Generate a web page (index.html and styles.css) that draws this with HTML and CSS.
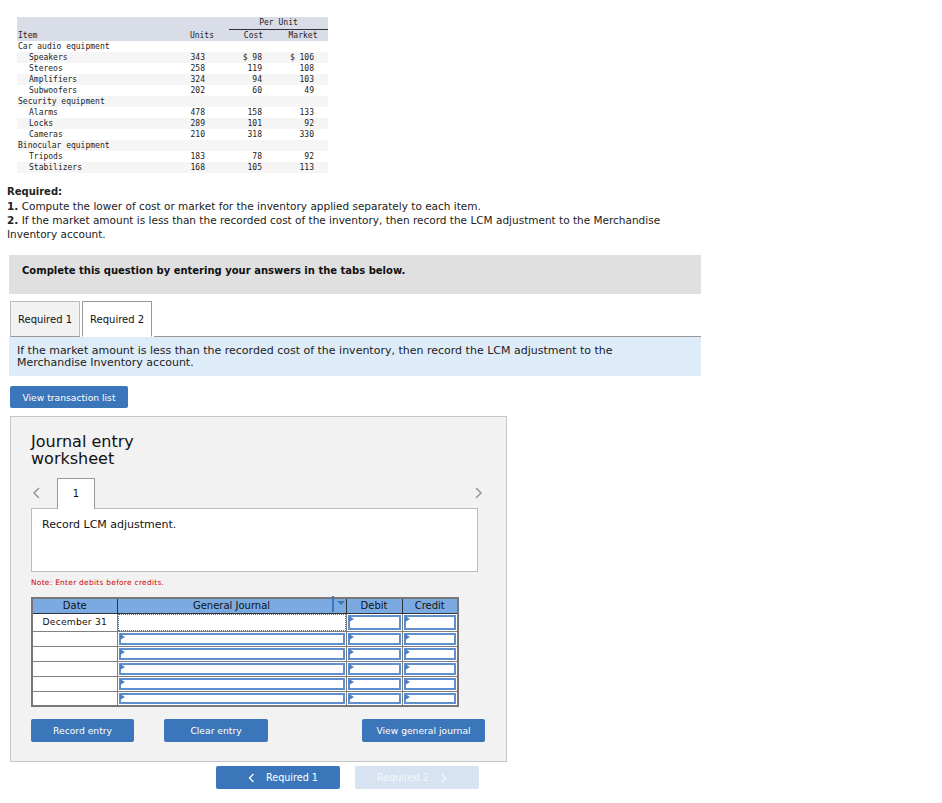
FILE: index.html
```html
<!DOCTYPE html>
<html>
<head>
<meta charset="utf-8">
<link rel="stylesheet" href="styles.css">
</head>
<body>
<div class="page">
  <table class="inv">
    <thead>
      <tr class="h1"><th></th><th></th><th colspan="2" class="perunit">Per Unit</th></tr>
      <tr class="h2"><th class="c-item">Item</th><th class="c-units">Units</th><th class="c-cost">Cost</th><th class="c-mkt">Market</th></tr>
    </thead>
    <tbody>
      <tr><td class="cat">Car audio equipment</td><td></td><td></td><td></td></tr>
      <tr class="alt"><td class="sub">Speakers</td><td class="n1">343</td><td class="n2">$ 98</td><td class="n3">$ 106</td></tr>
      <tr><td class="sub">Stereos</td><td class="n1">258</td><td class="n2">119</td><td class="n3">108</td></tr>
      <tr class="alt"><td class="sub">Amplifiers</td><td class="n1">324</td><td class="n2">94</td><td class="n3">103</td></tr>
      <tr><td class="sub">Subwoofers</td><td class="n1">202</td><td class="n2">60</td><td class="n3">49</td></tr>
      <tr class="alt"><td class="cat">Security equipment</td><td></td><td></td><td></td></tr>
      <tr><td class="sub">Alarms</td><td class="n1">478</td><td class="n2">158</td><td class="n3">133</td></tr>
      <tr class="alt"><td class="sub">Locks</td><td class="n1">289</td><td class="n2">101</td><td class="n3">92</td></tr>
      <tr><td class="sub">Cameras</td><td class="n1">210</td><td class="n2">318</td><td class="n3">330</td></tr>
      <tr class="alt"><td class="cat">Binocular equipment</td><td></td><td></td><td></td></tr>
      <tr><td class="sub">Tripods</td><td class="n1">183</td><td class="n2">78</td><td class="n3">92</td></tr>
      <tr class="alt"><td class="sub">Stabilizers</td><td class="n1">168</td><td class="n2">105</td><td class="n3">113</td></tr>
    </tbody>
  </table>

  <div class="required">
    <p class="req-title">Required:</p>
    <p><b>1.</b> Compute the lower of cost or market for the inventory applied separately to each item.</p>
    <p><b>2.</b> If the market amount is less than the recorded cost of the inventory, then record the LCM adjustment to the Merchandise Inventory account.</p>
  </div>

  <div class="complete">Complete this question by entering your answers in the tabs below.</div>

  <div class="tabs">
    <div class="tab">Required 1</div>
    <div class="tab active">Required 2</div>
    <div class="tab-fill"></div>
  </div>
  <div class="info">If the market amount is less than the recorded cost of the inventory, then record the LCM adjustment to the<br>Merchandise Inventory account.</div>

  <div class="btn-row-top"><button class="btn btn-vtl">View transaction list</button></div>

  <div class="panel">
    <h2 class="ws-title">Journal entry<br>worksheet</h2>
    <div class="ws-nav">
      <svg class="chev" width="10" height="14" viewBox="0 0 10 14"><polyline points="7,2 2,7 7,12" fill="none" stroke="#9a9a9a" stroke-width="1.6"/></svg>
      <div class="ws-tab">1</div>
      <div class="ws-nav-fill"></div>
      <svg class="chev" width="10" height="14" viewBox="0 0 10 14"><polyline points="3,2 8,7 3,12" fill="none" stroke="#9a9a9a" stroke-width="1.6"/></svg>
    </div>
    <div class="ws-box">Record LCM adjustment.</div>
    <div class="note">Note: Enter debits before credits.</div>

    <table class="jr">
      <colgroup><col class="w-date"><col class="w-gj"><col class="w-dr"><col class="w-cr"></colgroup>
      <thead>
        <tr><th>Date</th><th class="gj-head">General Journal<span class="dd"><span class="dd-arrow"></span></span></th><th>Debit</th><th>Credit</th></tr>
      </thead>
      <tbody>
        <tr class="first"><td class="date">December 31</td><td class="gj"><div class="focus"></div></td><td class="amt"><div class="inp"></div></td><td class="amt"><div class="inp"></div></td></tr>
        <tr><td class="date"></td><td class="gj"><div class="inp"></div></td><td class="amt"><div class="inp"></div></td><td class="amt"><div class="inp"></div></td></tr>
        <tr><td class="date"></td><td class="gj"><div class="inp"></div></td><td class="amt"><div class="inp"></div></td><td class="amt"><div class="inp"></div></td></tr>
        <tr><td class="date"></td><td class="gj"><div class="inp"></div></td><td class="amt"><div class="inp"></div></td><td class="amt"><div class="inp"></div></td></tr>
        <tr><td class="date"></td><td class="gj"><div class="inp"></div></td><td class="amt"><div class="inp"></div></td><td class="amt"><div class="inp"></div></td></tr>
        <tr><td class="date"></td><td class="gj"><div class="inp"></div></td><td class="amt"><div class="inp"></div></td><td class="amt"><div class="inp"></div></td></tr>
      </tbody>
    </table>

    <div class="ws-buttons">
      <button class="btn btn-rec">Record entry</button>
      <button class="btn btn-clr">Clear entry</button>
      <button class="btn btn-vgj">View general journal</button>
    </div>
  </div>

  <div class="bottom-nav">
    <button class="btn nav-btn"><svg class="nchev" width="8" height="10" viewBox="0 0 8 10"><polyline points="5.5,1 1.5,5 5.5,9" fill="none" stroke="#fff" stroke-width="1.3"/></svg>Required 1</button>
    <button class="btn nav-btn disabled">Required 2<svg class="nchev" width="8" height="10" viewBox="0 0 8 10"><polyline points="2.5,1 6.5,5 2.5,9" fill="none" stroke="#f3f6fa" stroke-width="1.3"/></svg></button>
  </div>
</div>
</body>
</html>
```

FILE: styles.css
```css
* { box-sizing: border-box; }
html, body { margin: 0; padding: 0; background: #fff; }
body { font-family: "DejaVu Sans", Verdana, sans-serif; font-size: 10px; color: #111; }
.page { padding: 17px 0 0 0; width: 942px; }

/* inventory table */
.inv { margin-left: 17px; border-collapse: collapse; border-spacing: 0; font-family: "DejaVu Sans Mono", "Liberation Mono", monospace; font-size: 8px; color: #222; }
.inv th, .inv td { padding: 0; font-weight: normal; white-space: nowrap; }
.inv thead tr { background: #d9dde8; height: 12px; }
.inv tbody tr { height: 11px; }
.inv tbody tr.alt { background: #f5f5f5; }
.inv .c-item { text-align: left; padding-left: 1px; width: 163px; }
.inv .c-units { text-align: right; padding-right: 15px; width: 49px; }
.inv .c-cost { text-align: center; width: 49px; }
.inv .c-mkt { text-align: center; width: 50px; }
.inv .perunit { text-align: center; border-bottom: 1px solid #333; line-height: 10px; }
.inv .h2 th { line-height: 11px; }
.inv .cat { padding-left: 1px; }
.inv .sub { padding-left: 12px; }
.inv .n1 { text-align: right; padding-right: 24px; }
.inv .n2 { text-align: right; padding-right: 16px; }
.inv .n3 { text-align: right; padding-right: 14px; }

/* required text */
.required { margin: 12px 0 0 7px; width: 690px; line-height: 14px; font-size: 10.5px; color: #222; }
.required p { margin: 0; }
.req-title { font-weight: bold; font-size: 10px; }

.complete { margin: 14px 0 0 9px; width: 692px; height: 39px; background: #e0e0e0; padding: 10px 0 0 13px; font-weight: bold; line-height: 12px; color: #111; }

.tabs { display: flex; margin: 7px 0 0 10px; width: 691px; height: 36px; align-items: flex-end; }
.tab { height: 36px; padding: 0 7px; line-height: 36px; background: #f2f2f2; border: 1px solid #bbb; border-bottom: 1px solid #999; margin-right: 2px; font-size: 10px; }
.tab.active { background: #fff; border-color: #999; border-bottom-color: #fff; }
.tab-fill { flex: 1; border-bottom: 1px solid #999; height: 1px; }
.info { margin-left: 9px; width: 692px; height: 39px; background: #ddecf8; padding: 8px 0 0 8px; line-height: 12px; font-size: 11px; color: #222; }

.btn { font-family: "DejaVu Sans", Verdana, sans-serif; font-size: 9.2px; color: #fff; background: #3b76ba; border: none; border-radius: 2px; height: 23px; padding: 0; cursor: pointer; }
.btn-row-top { margin: 10px 0 0 10px; height: 22px; }
.btn-vtl { width: 118px; height: 22px; }

.panel { margin: 8px 0 0 10px; width: 497px; height: 346px; background: #f2f2f2; border: 1px solid #c6c6c6; padding: 0 0 0 20px; }
.ws-title { margin: 0; padding-top: 16px; font-size: 16px; font-weight: normal; line-height: 17px; color: #111; }
.ws-nav { display: flex; align-items: center; margin-top: 10px; width: 452px; height: 31px; position: relative; }
.chev { display: block; }
.ws-nav .chev:first-child { margin-left: 1px; margin-right: 15px; }
.ws-tab { width: 38px; height: 31px; background: #fff; border: 1px solid #999; border-bottom: none; text-align: center; line-height: 30px; position: relative; top: 1px; z-index: 1; }
.ws-nav-fill { flex: 1; }
.ws-box { width: 447px; height: 64px; background: #fff; border: 1px solid #bbb; padding: 10px 0 0 10px; line-height: 12px; font-size: 11px; }
.note { margin-top: 6px; font-size: 7.4px; letter-spacing: 0.3px; color: #c00; line-height: 10px; }

.jr { margin-top: 9px; border-collapse: collapse; table-layout: fixed; width: 426px; border: 2px solid #777; }
.w-date { width: 85px; } .w-gj { width: 229px; } .w-dr { width: 56px; } .w-cr { width: 56px; }
.jr th { background: #7baae3; border: 1px solid #333; font-weight: normal; height: 15px; padding: 0; line-height: 13px; font-size: 10px; color: #111; }
.jr .gj-head { position: relative; }
.dd { position: absolute; right: 0; top: -3px; width: 14px; height: 16px; border-left: 2px solid #3b76ba; }
.dd-arrow { position: absolute; left: 3px; top: 5px; border-left: 4px solid transparent; border-right: 4px solid transparent; border-top: 4px solid #3b76ba; }
.jr td { padding: 0; height: 15px; border: 1px solid #808080; background: #fff; position: relative; }
.jr tr.first td { height: 18px; }
.jr td.date { text-align: center; line-height: 14px; font-size: 9.2px; letter-spacing: 0.2px; }
.inp { position: absolute; inset: 1px; border: 2px solid #5f8fcf; background: #fff; }
.inp::before { content: ""; position: absolute; left: -1px; top: -1px; border-top: 3px solid transparent; border-bottom: 3px solid transparent; border-left: 5px solid #4a7fc6; }
.focus { position: absolute; inset: 0; border: 1px dotted #3b76ba; }

.ws-buttons { display: flex; margin-top: 12px; width: 454px; }
.btn-rec { width: 103px; }
.btn-clr { width: 104px; margin-left: 30px; }
.btn-vgj { width: 123px; margin-left: auto; }

.bottom-nav { display: flex; margin: 4px 0 0 216px; gap: 15px; }
.nav-btn { width: 124px; height: 23px; font-size: 9.6px; display: flex; align-items: center; justify-content: center; }
.nav-btn.disabled { background: #d7e3f1; color: #f3f6fa; }
.nav-btn .nchev { display: block; margin: 0 10px; }
```
